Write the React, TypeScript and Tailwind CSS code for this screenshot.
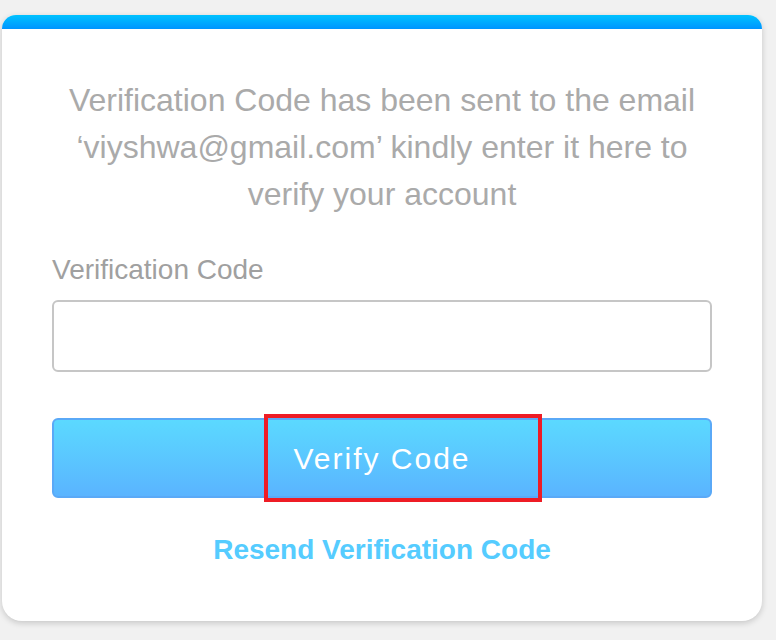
export default function App() {
  return (
    <div
      className="min-h-[640px] w-[776px] bg-[#f1f1f1] pt-[15px] pl-[2px]"
      style={{ fontFamily: '"Liberation Sans", Arial, sans-serif' }}
    >
      <div className="w-[760px] overflow-hidden rounded-t-[14px] rounded-b-[20px] bg-white shadow-[0_2px_6px_rgba(0,0,0,0.18)]">
        <div className="h-[14px] bg-gradient-to-b from-[#00c2ff] to-[#0094ff]" />

        <div className="px-[50px] pt-[48px] pb-[54px]">
          <p className="text-center text-[32px] leading-[47px] text-[#aaaaaa]">
            Verification Code has been sent to the email
            <br />
            ‘viyshwa@gmail.com’ kindly enter it here to
            <br />
            verify your account
          </p>

          <label className="mt-[35px] block text-[28px] leading-[34px] text-[#a0a0a0]">
            Verification Code
          </label>
          <input
            type="text"
            className="mt-[13px] block h-[72px] w-[660px] rounded-[6px] border-2 border-[#c6c6c6] bg-white px-4 text-[24px] outline-none"
          />

          <div className="relative mt-[46px]">
            <button className="flex h-[80px] w-[660px] items-center justify-center rounded-[6px] border-2 border-[#5aa9f7] bg-gradient-to-b from-[#5bd9ff] to-[#5ab4ff] text-[30px] tracking-[2px] text-white">
              Verify Code
            </button>
            <div className="pointer-events-none absolute top-[-4px] left-[212px] h-[88px] w-[278px] border-4 border-[#ee1c25]" />
          </div>

          <div className="mt-[35px] text-center text-[28px] leading-[34px] font-bold text-[#55ccff]">
            Resend Verification Code
          </div>
        </div>
      </div>
    </div>
  )
}
